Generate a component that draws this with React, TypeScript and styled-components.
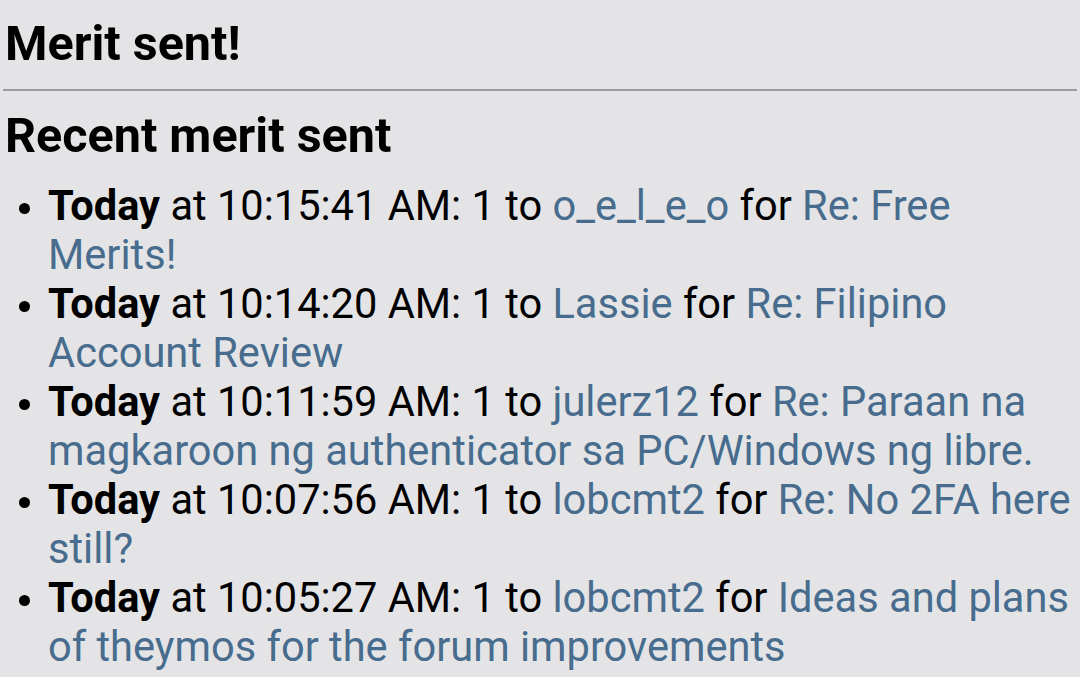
import styled, { createGlobalStyle } from "styled-components";

const GlobalStyle = createGlobalStyle`
  html, body {
    margin: 0;
    padding: 0;
    background: #e4e4e6;
    overflow: hidden;
  }
  body {
    font-family: Roboto, "Liberation Sans", sans-serif;
    color: #000;
  }
`;

const Page = styled.div`
  height: 677px;
  overflow: hidden;
  padding: 0 0 0 5px;
`;

const Title = styled.h1`
  font-size: 48.5px;
  font-weight: 700;
  margin: 15px 0 0 0;
  line-height: normal;
`;

const Rule = styled.hr`
  border: none;
  height: 2px;
  background: #9a9a9c;
  margin: 17px 3px 0 -2px;
`;

const SubTitle = styled.h2`
  font-size: 48.5px;
  font-weight: 700;
  margin: 16px 0 0 0;
  line-height: normal;
`;

const MeritList = styled.ul`
  margin: 17px 0 0 0;
  padding-left: 43px;
  font-size: 41.6px;
  line-height: 49px;
`;

const Item = styled.li`
  &::marker {
    font-size: 36px;
  }
`;

const Day = styled.b`
  font-weight: 700;
`;

const Link = styled.a`
  color: #476c8e;
  text-decoration: none;
`;

interface Merit {
  time: string;
  user: string;
  topic: string;
}

const merits: Merit[] = [
  { time: "10:15:41 AM", user: "o_e_l_e_o", topic: "Re: Free Merits!" },
  { time: "10:14:20 AM", user: "Lassie", topic: "Re: Filipino Account Review" },
  {
    time: "10:11:59 AM",
    user: "julerz12",
    topic: "Re: Paraan na magkaroon ng authenticator sa PC/Windows ng libre.",
  },
  { time: "10:07:56 AM", user: "lobcmt2", topic: "Re: No 2FA here still?" },
  {
    time: "10:05:27 AM",
    user: "lobcmt2",
    topic: "Ideas and plans of theymos for the forum improvements",
  },
  { time: "10:01:33 AM", user: "Tytanowy Janusz", topic: "Re: Merit & new rank requirements" },
];

export default function App() {
  return (
    <>
      <GlobalStyle />
      <Page>
        <Title>Merit sent!</Title>
        <Rule />
        <SubTitle>Recent merit sent</SubTitle>
        <MeritList>
          {merits.map((m, i) => (
            <Item key={i}>
              <Day>Today</Day> at {m.time}: 1 to <Link href="#">{m.user}</Link> for{" "}
              <Link href="#">{m.topic}</Link>
            </Item>
          ))}
        </MeritList>
      </Page>
    </>
  );
}
